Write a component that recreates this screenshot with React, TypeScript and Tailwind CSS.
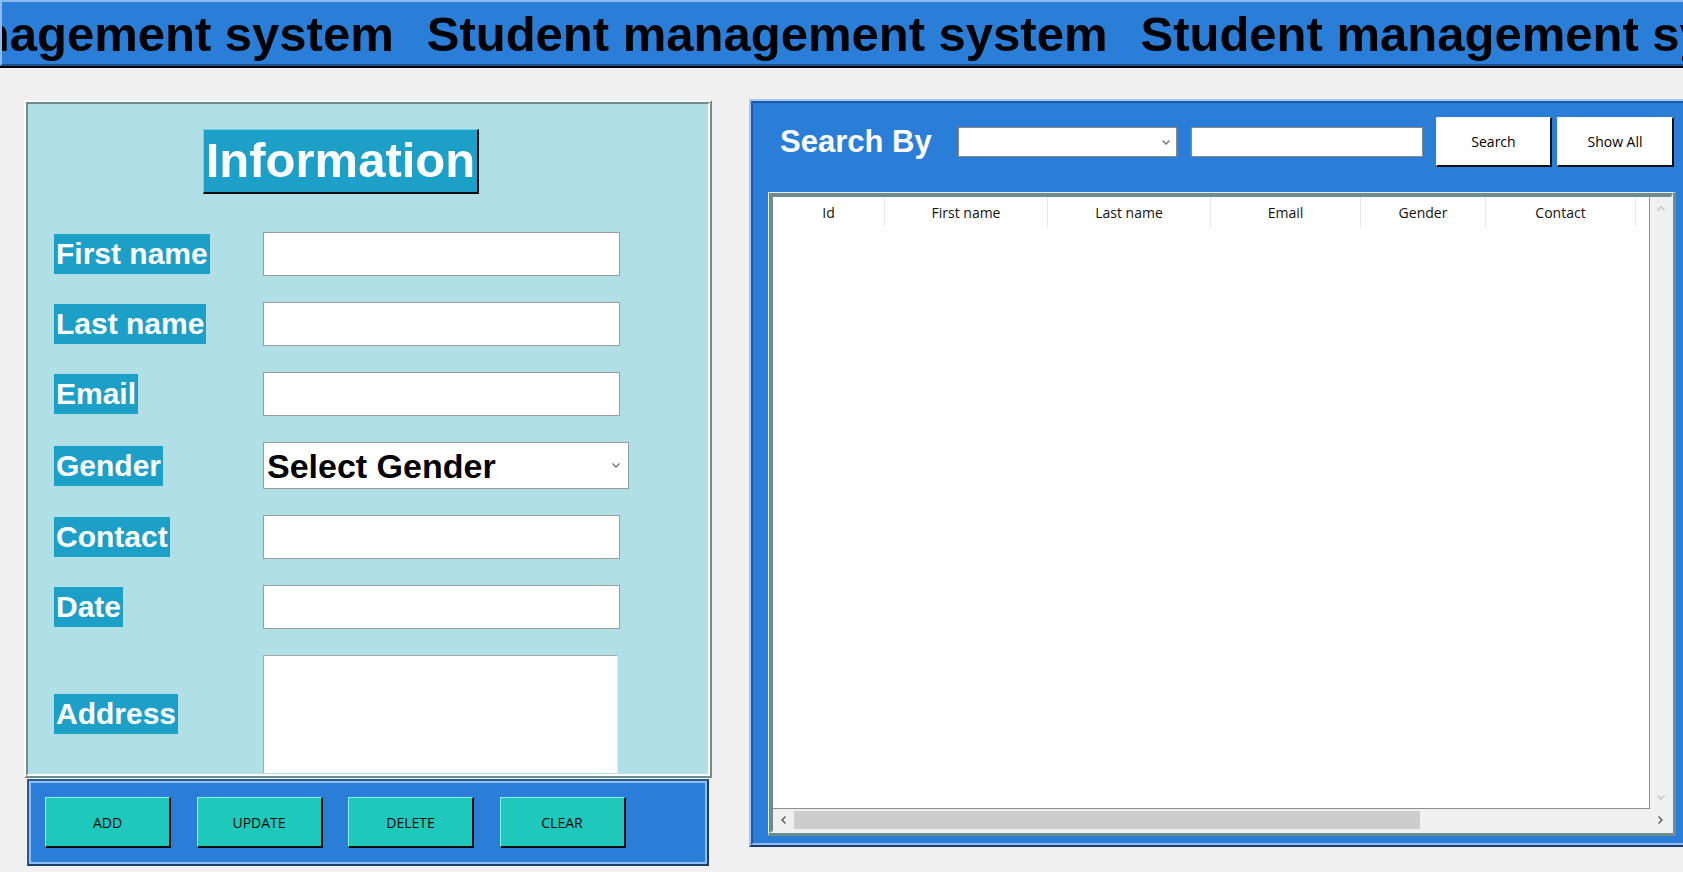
import React from "react";

const Chev = ({ dir, color }: { dir: "up" | "down" | "left" | "right"; color: string }) => {
  const horiz = dir === "up" || dir === "down";
  const d =
    dir === "up"
      ? "M0.5 4.5 L4 1 L7.5 4.5"
      : dir === "down"
      ? "M0.5 0.5 L4 4 L7.5 0.5"
      : dir === "left"
      ? "M4.5 0.5 L1 4 L4.5 7.5"
      : "M0.5 0.5 L4 4 L0.5 7.5";
  return (
    <svg width={horiz ? 8 : 5} height={horiz ? 5 : 8} viewBox={horiz ? "0 0 8 5" : "0 0 5 8"}>
      <path d={d} fill="none" stroke={color} strokeWidth={1.3} />
    </svg>
  );
};

const Label = ({ text }: { text: string }) => (
  <span className="h-[40px] bg-[#1da0c8] px-[2px] text-[30px] font-bold leading-[40px] text-white">{text}</span>
);

const Entry = () => <div className="h-[44px] w-[357px] border border-[#9a9a9a] bg-white" />;

const Row = ({ label, children, h }: { label: string; children: React.ReactNode; h: string }) => (
  <div className={`flex items-center ${h}`}>
    <div className="flex w-[235px] pl-[26px]">
      <Label text={label} />
    </div>
    {children}
  </div>
);

const ActionBtn = ({ text }: { text: string }) => (
  <div className="flex h-[51px] w-[126px] items-center justify-center border-t border-l border-t-[#8af4ff] border-l-[#8af4ff] border-b-2 border-r-2 border-b-[#0a0a0a] border-r-[#0a0a0a] bg-[#1ec8ba] font-['Open_Sans',sans-serif] text-[14px] text-[#0a0a0a]">
    {text}
  </div>
);

const cols: [string, number][] = [
  ["Id", 112],
  ["First name", 163],
  ["Last name", 163],
  ["Email", 150],
  ["Gender", 125],
  ["Contact", 150],
];

export default function App() {
  return (
    <div className="h-[872px] w-[1683px] overflow-hidden bg-[#f0f0f0] font-['Liberation_Sans',Arial,sans-serif]">
      {/* Header */}
      <div className="h-[68px] border-b-2 border-b-black bg-[#1c4f8f]">
        <div className="flex h-[66px] overflow-hidden whitespace-nowrap border-t-2 border-l-2 border-t-[#8cbaf2] border-l-[#8cbaf2] border-b-2 border-b-[#1c4f8f] bg-[#2a7ed8] pt-[4px]">
          <span className="ml-[-289px] mr-[33px] shrink-0 text-[49px] font-bold leading-[56px] text-black">Student management system</span>
          <span className="mr-[33px] shrink-0 text-[49px] font-bold leading-[56px] text-black">Student management system</span>
          <span className="mr-[33px] shrink-0 text-[49px] font-bold leading-[56px] text-black">Student management system</span>
        </div>
      </div>

      <div className="flex">
        {/* Left column */}
        <div className="ml-[24px] mt-[32px] flex w-[688px] shrink-0 flex-col">
          <div className="h-[678px] border-t-2 border-l-2 border-t-white border-l-white border-b-2 border-r-2 border-b-[#6f8c8f] border-r-[#6f8c8f]">
            <div className="flex h-full flex-col overflow-hidden border-t-2 border-l-2 border-t-[#6f8c8f] border-l-[#6f8c8f] border-b-2 border-r-2 border-b-white border-r-white bg-[#b0dfe5]">
              <div className="pl-[175px] pt-[25px]">
                <div className="flex h-[65px] w-[276px] items-center justify-center border-t border-l border-t-[#6cd0ee] border-l-[#6cd0ee] border-b-2 border-r-2 border-b-[#0a0a0a] border-r-[#0a0a0a] bg-[#1da0c8] text-[49px] font-bold text-white">
                  Information
                </div>
              </div>
              <div className="mt-[38px] flex flex-col gap-[26px]">
                <Row label="First name" h="h-[44px]">
                  <Entry />
                </Row>
                <Row label="Last name" h="h-[44px]">
                  <Entry />
                </Row>
                <Row label="Email" h="h-[44px]">
                  <Entry />
                </Row>
                <Row label="Gender" h="h-[47px]">
                  <div className="flex h-[47px] w-[366px] items-center justify-between border border-[#9a9a9a] bg-white pl-[3px] pr-[8px]">
                    <span className="text-[34px] font-bold leading-none text-black">Select Gender</span>
                    <Chev dir="down" color="#707070" />
                  </div>
                </Row>
                <Row label="Contact" h="h-[44px]">
                  <Entry />
                </Row>
                <Row label="Date" h="h-[44px]">
                  <Entry />
                </Row>
                <Row label="Address" h="h-[118px]">
                  <div className="h-[118px] w-[355px] shrink-0 border-t border-l border-t-[#a8a8a8] border-l-[#a8a8a8] border-r border-r-[#e4e4e4] bg-white" />
                </Row>
              </div>
            </div>
          </div>
          {/* Button panel */}
          <div className="ml-[3px] mt-[1px] h-[87px] w-[682px] border-t-2 border-l-2 border-t-[#2a5a96] border-l-[#2a5a96] border-b-2 border-r-2 border-b-[#1d3d6a] border-r-[#1d3d6a]">
            <div className="flex h-full gap-[25.5px] border-t-2 border-l-2 border-t-[#8fbff5] border-l-[#8fbff5] border-b-2 border-r-2 border-b-[#8fbff5] border-r-[#8fbff5] bg-[#2a7ed8] pl-[14px] pt-[14px]">
              <ActionBtn text="ADD" />
              <ActionBtn text="UPDATE" />
              <ActionBtn text="DELETE" />
              <ActionBtn text="CLEAR" />
            </div>
          </div>
        </div>

        {/* Right panel */}
        <div className="ml-[37px] mt-[31px] h-[748px] w-[950px] shrink-0 border-t-2 border-l-2 border-t-[#a8c8f0] border-l-[#a8c8f0] border-b-2 border-r-2 border-b-[#1d3d6a] border-r-[#1d3d6a]">
          <div className="flex h-full flex-col border-t-2 border-l-2 border-t-[#1c5aa8] border-l-[#1c5aa8] border-b-2 border-r-2 border-b-[#8fbff5] border-r-[#8fbff5] bg-[#2a7ed8]">
            <div className="mt-[14px] flex h-[50px] items-center">
              <div className="w-[205px] pl-[27px] text-[31px] font-bold text-white">Search By</div>
              <div className="flex h-[30px] w-[219px] items-center justify-end border border-[#8a8a8a] bg-white pr-[6px]">
                <Chev dir="down" color="#707070" />
              </div>
              <div className="ml-[14px] h-[30px] w-[232px] border border-[#8a8a8a] bg-white" />
              <div className="ml-[13px] flex h-[50px] w-[116px] items-center justify-center border-t border-l border-t-[#f4f4f4] border-l-[#f4f4f4] border-b-2 border-r-2 border-b-[#101010] border-r-[#101010] bg-white font-['Open_Sans',sans-serif] text-[14px] text-black">
                Search
              </div>
              <div className="ml-[5px] flex h-[50px] w-[117px] items-center justify-center border-t border-l border-t-[#f4f4f4] border-l-[#f4f4f4] border-b-2 border-r-2 border-b-[#101010] border-r-[#101010] bg-white font-['Open_Sans',sans-serif] text-[14px] text-black">
                Show All
              </div>
            </div>

            {/* Table frame */}
            <div className="ml-[15px] mt-[25px] h-[644px] w-[908px] border-t border-l border-t-[#e8eeee] border-l-[#e8eeee] border-b-[3px] border-r-[3px] border-b-[#6d8c8c] border-r-[#6d8c8c]">
              <div className="flex h-full flex-col border-t-4 border-l-4 border-t-[#6d8c8c] border-l-[#6d8c8c] border-b-2 border-r-2 border-b-[#eef2f2] border-r-[#eef2f2] bg-[#f0f0f0]">
                <div className="flex min-h-0 flex-1">
                  <div className="flex flex-1 flex-col overflow-hidden border-b border-r border-b-[#8a9090] border-r-[#8a9090] bg-white">
                    <div className="flex h-[30px] shrink-0 font-['Open_Sans',sans-serif] text-[14px] text-[#111]">
                      {cols.map(([name, w]) => (
                        <div
                          key={name}
                          style={{ width: w }}
                          className="flex shrink-0 items-center justify-center border-r border-r-[#e5e5e5]"
                        >
                          {name}
                        </div>
                      ))}
                      <div className="flex-1" />
                    </div>
                  </div>
                  <div className="flex w-[21px] flex-col items-center justify-between py-[9px]">
                    <Chev dir="up" color="#c2c2c2" />
                    <Chev dir="down" color="#c2c2c2" />
                  </div>
                </div>
                <div className="flex h-[22px] shrink-0 items-center">
                  <div className="flex w-[21px] justify-center">
                    <Chev dir="left" color="#505050" />
                  </div>
                  <div className="h-[18px] w-[626px] bg-[#cdcdcd]" />
                  <div className="flex-1" />
                  <div className="flex w-[21px] justify-center">
                    <Chev dir="right" color="#505050" />
                  </div>
                </div>
              </div>
            </div>
          </div>
        </div>
      </div>
    </div>
  );
}
